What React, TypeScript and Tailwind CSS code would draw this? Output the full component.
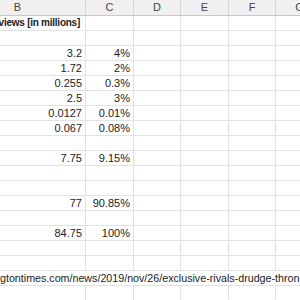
import React from "react";

type Row = { b?: string; c?: string; title?: boolean; url?: boolean };

const rows: Row[] = [
  { b: "views [in millions]", title: true },
  {},
  { b: "3.2", c: "4%" },
  { b: "1.72", c: "2%" },
  { b: "0.255", c: "0.3%" },
  { b: "2.5", c: "3%" },
  { b: "0.0127", c: "0.01%" },
  { b: "0.067", c: "0.08%" },
  {},
  { b: "7.75", c: "9.15%" },
  {},
  {},
  { b: "77", c: "90.85%" },
  {},
  { b: "84.75", c: "100%" },
  {},
  {},
  { b: "gtontimes.com/news/2019/nov/26/exclusive-rivals-drudge-throne", url: true },
  {},
  {},
];

const cols = [
  { name: "B", w: "w-[136px] -ml-[50px]" },
  { name: "C", w: "w-[48px]" },
  { name: "D", w: "w-[47px]" },
  { name: "E", w: "w-[48px]" },
  { name: "F", w: "w-[47px]" },
  { name: "G", w: "w-[48px]" },
];

export default function App() {
  return (
    <div
      className="w-[300px] h-[300px] overflow-hidden bg-white text-[#222] text-[11px]"
      style={{ fontFamily: '"Liberation Sans", Arial, sans-serif' }}
    >
      <div className="flex h-[16px] bg-[#f0f0f0] border-b border-[#c8c8c8]">
        {cols.map((c) => (
          <div
            key={c.name}
            className={`${c.w} shrink-0 border-r border-[#d4d4d4] flex items-center justify-center text-[#444] leading-none`}
          >
            {c.name}
          </div>
        ))}
      </div>

      {rows.map((r, i) => (
        <div key={i} className="flex h-[15px] border-b border-[#e2e2e2]">
          <div
            className={`w-[136px] -ml-[50px] shrink-0 relative flex items-center leading-none ${
              r.url ? "" : "border-r border-[#e2e2e2]"
            } ${r.title ? "justify-end pr-[5px] font-bold text-[10px] tracking-[-0.25px]" : r.url ? "" : "justify-end pr-[3px]"}`}
          >
            {r.url ? (
              <span className="absolute left-[50px] whitespace-nowrap text-[10.7px]">{r.b}</span>
            ) : (
              <span className="whitespace-nowrap">{r.b}</span>
            )}
          </div>
          <div
            className={`w-[48px] shrink-0 flex items-center justify-end pr-[3px] leading-none ${
              r.url ? "" : "border-r border-[#e2e2e2]"
            }`}
          >
            {r.c}
          </div>
          <div className={`w-[47px] shrink-0 ${r.url ? "" : "border-r border-[#e2e2e2]"}`} />
          <div className={`w-[48px] shrink-0 ${r.url ? "" : "border-r border-[#e2e2e2]"}`} />
          <div className={`w-[47px] shrink-0 ${r.url ? "" : "border-r border-[#e2e2e2]"}`} />
          <div className={`w-[48px] shrink-0 ${r.url ? "" : "border-r border-[#e2e2e2]"}`} />
        </div>
      ))}
    </div>
  );
}
